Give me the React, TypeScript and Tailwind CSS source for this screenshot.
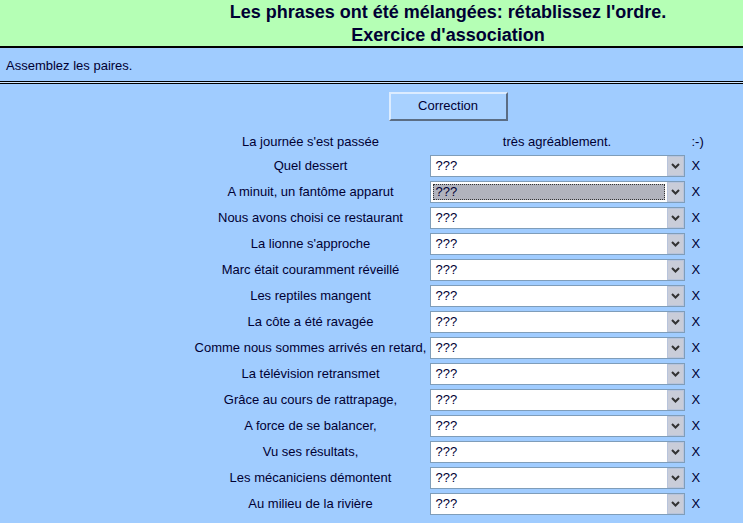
import React from 'react'

const rows = [
  'Quel dessert',
  'A minuit, un fantôme apparut',
  'Nous avons choisi ce restaurant',
  "La lionne s'approche",
  'Marc était couramment réveillé',
  'Les reptiles mangent',
  'La côte a été ravagée',
  'Comme nous sommes arrivés en retard,',
  'La télévision retransmet',
  'Grâce au cours de rattrapage,',
  'A force de se balancer,',
  'Vu ses résultats,',
  'Les mécaniciens démontent',
  'Au milieu de la rivière',
]

const FakeSelect = ({ focused }: { focused?: boolean }) => {
  return (
    <div className="flex h-[22px] w-[255px] border border-[#7f9db9] bg-white">
      <div className="flex-1 p-[2px]">
        <div
          className={
            focused
              ? 'h-full border border-dotted border-[#333] bg-[#b1b3bd] pl-[2px] leading-[14px]'
              : 'h-full pl-[3px] leading-[16px]'
          }
        >
          ???
        </div>
      </div>
      <div className="flex w-[17px] items-center justify-center border border-[#b8c4dc] bg-[#c9cdd9]">
        <svg width="9" height="6" viewBox="0 0 9 6">
          <path d="M1 1 L4.5 4.5 L8 1" stroke="#333" strokeWidth="2" fill="none" />
        </svg>
      </div>
    </div>
  )
}

export default function App() {
  return (
    <div className="h-[523px] w-[743px] overflow-hidden bg-[#a0ccff] font-['Liberation_Sans',Arial,sans-serif] text-[13px] text-[#000033]">
      <div className="w-[896px]">
        <div className="h-[46px] bg-[#b5ffb5] pt-[1px] text-center text-[18px] font-bold leading-[23px]">
          <div>Les phrases ont été mélangées: rétablissez l'ordre.</div>
          <div>Exercice d'association</div>
        </div>
        <div className="h-[2px] bg-black" />
        <div className="h-[33px] pl-[6px] pt-[10px] leading-[15px]">Assemblez les paires.</div>
        <div className="h-[1px] bg-black" />
        <div className="h-[1px] bg-[#cfe6ff]" />
        <div className="h-[1px] bg-black" />

        <div className="flex justify-center pt-[8px]">
          <button className="h-[29px] w-[119px] border-2 border-t-[#dcecff] border-l-[#dcecff] border-b-[#5b6d84] border-r-[#5b6d84] bg-[#a8d1ff] pb-[1px] text-[13px]">
            Correction
          </button>
        </div>

        <div className="mt-[10px] flex flex-col items-center">
          <div className="flex h-[22px] items-center">
            <div className="w-[238px] text-center">La journée s'est passée</div>
            <div className="w-[255px] text-center">très agréablement.</div>
            <div className="w-[20px] pl-[7px]">:-)</div>
          </div>
          {rows.map((label, index) => (
            <div className="flex h-[26px] items-center" key={index}>
              <div className="w-[238px] text-center">{label}</div>
              <FakeSelect focused={index === 1} />
              <div className="w-[20px] pl-[7px]">X</div>
            </div>
          ))}
        </div>
      </div>
    </div>
  )
}
